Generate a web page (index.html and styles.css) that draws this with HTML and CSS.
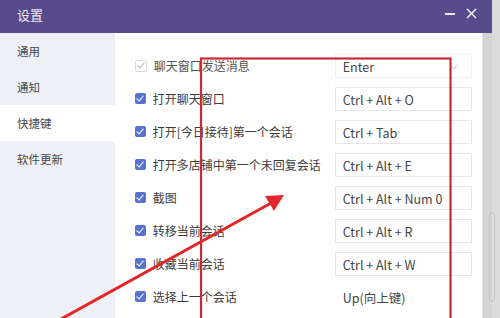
FILE: index.html
```html
<!DOCTYPE html>
<html lang="zh-CN">

<head>
    <meta charset="UTF-8">
    <meta name="viewport" content="width=device-width, initial-scale=1.0">
    <title>设置</title>
    <link rel="stylesheet" href="styles.css">
</head>

<body>
    <div class="window">
        <div class="titlebar">
            <span class="title">设置</span>
            <div class="controls">
                <span class="min"></span>
                <svg class="close" width="11" height="11" viewBox="0 0 11 11">
                    <path d="M1 1 L10 10 M10 1 L1 10" stroke="#fff" stroke-width="1.4" fill="none" />
                </svg>
            </div>
        </div>

        <div class="content">
            <ul class="side">
                <li>通用</li>
                <li>通知</li>
                <li class="active">快捷键</li>
                <li>软件更新</li>
            </ul>

            <div class="main">
                <div class="row">
                    <label class="item"><span class="check disabled"></span>聊天窗口发送消息</label>
                    <div class="key select">Enter<span class="arrow"></span></div>
                </div>
                <div class="row">
                    <label class="item"><span class="check"></span>打开聊天窗口</label>
                    <div class="key">Ctrl + Alt + O</div>
                </div>
                <div class="row">
                    <label class="item"><span class="check"></span>打开[今日接待]第一个会话</label>
                    <div class="key">Ctrl + Tab</div>
                </div>
                <div class="row">
                    <label class="item"><span class="check"></span>打开多店铺中第一个未回复会话</label>
                    <div class="key">Ctrl + Alt + E</div>
                </div>
                <div class="row">
                    <label class="item"><span class="check"></span>截图</label>
                    <div class="key">Ctrl + Alt + Num 0</div>
                </div>
                <div class="row">
                    <label class="item"><span class="check"></span>转移当前会话</label>
                    <div class="key">Ctrl + Alt + R</div>
                </div>
                <div class="row">
                    <label class="item"><span class="check"></span>收藏当前会话</label>
                    <div class="key">Ctrl + Alt + W</div>
                </div>
                <div class="row">
                    <label class="item"><span class="check"></span>选择上一个会话</label>
                    <div class="key plain">Up(向上键)</div>
                </div>
            </div>

            <div class="scroll"><span class="thumb"></span></div>
        </div>
    </div>

    <!-- 标注 -->
    <svg class="marks" width="500" height="318" viewBox="0 0 500 318">
        <rect x="201" y="58.5" width="249.5" height="270" fill="none" stroke="#c92a36" stroke-width="2.2" />
        <line x1="52" y1="324" x2="272" y2="202.5" stroke="#e2262a" stroke-width="3" />
        <polygon points="284,195 265,196 274,211" fill="#e2262a" />
    </svg>
</body>

</html>
```

FILE: styles.css
```css
html,
body {
    margin: 0;
    padding: 0;
}

body {
    width: 500px;
    height: 318px;
    overflow: hidden;
    position: relative;
    background-color: #dcdcdc;
    font-family: "Noto Sans CJK SC", "Noto Sans", sans-serif;
    color: #3c3c3c;
}

.window {
    width: 492px;
    height: 318px;
    display: flex;
    flex-direction: column;
}

.titlebar {
    height: 33px;
    flex: none;
    display: flex;
    align-items: center;
    justify-content: space-between;
    padding: 0 15px 0 17px;
    background-color: #574b8b;
    color: #f0eef6;
}

.title {
    font-size: 13px;
    margin-top: -4px;
}

.controls {
    display: flex;
    align-items: center;
    gap: 11px;
    margin-top: -6px;
}

.min {
    width: 10px;
    height: 2px;
    background-color: #e8e6f0;
}

.content {
    flex: 1;
    display: flex;
    min-height: 0;
}

.side {
    width: 115px;
    margin: 0;
    padding: 0;
    list-style: none;
    background-color: #eef0f5;
    font-size: 11.5px;
    color: #484848;
}

.side li {
    height: 36px;
    line-height: 36px;
    padding-left: 17px;
}

.side li.active {
    background-color: #fff;
}

.main {
    width: 368px;
    padding: 16px 0 0 20px;
    box-sizing: border-box;
    background-color: #fff;
}

.row {
    height: 33px;
    display: grid;
    grid-template-columns: 200px 137px;
    align-items: center;
}

.item {
    display: flex;
    align-items: center;
    font-size: 12px;
    white-space: nowrap;
}

.check {
    width: 11px;
    height: 11px;
    margin-right: 7px;
    border-radius: 2px;
    background-color: #5872d2;
    position: relative;
}

.check::after {
    content: "";
    position: absolute;
    left: 3.5px;
    top: 1px;
    width: 3px;
    height: 6px;
    border: solid #fff;
    border-width: 0 1.5px 1.5px 0;
    transform: rotate(40deg);
}

.check.disabled {
    background-color: #fff;
    border: 1px solid #dcdcdc;
    width: 10px;
    height: 10px;
}

.check.disabled::after {
    border-color: #b5b5b5;
    left: 3px;
    top: 0.5px;
}

.item:has(.disabled) {
    color: #555;
}

.key {
    height: 24px;
    line-height: 24px;
    box-sizing: border-box;
    padding-left: 7px;
    border: 1px solid #e6e6e6;
    font-size: 12.5px;
    color: #454545;
    position: relative;
}

.key.select {
    border-color: #f0f0f0;
}

.key.plain {
    border-color: transparent;
}

.arrow {
    position: absolute;
    right: 14px;
    top: 7px;
    width: 5px;
    height: 5px;
    border: solid #ccc;
    border-width: 0 1px 1px 0;
    transform: rotate(45deg);
}

.scroll {
    width: 9px;
    background-color: #d4d4d4;
    border-left: 1px solid #e2e2e2;
    position: relative;
}

.thumb {
    position: absolute;
    left: 6px;
    top: 179px;
    width: 4px;
    height: 88px;
    border: 1px solid #c4c4c4;
    border-radius: 3px;
}

.marks {
    position: absolute;
    left: 0;
    top: 0;
    pointer-events: none;
}
```
